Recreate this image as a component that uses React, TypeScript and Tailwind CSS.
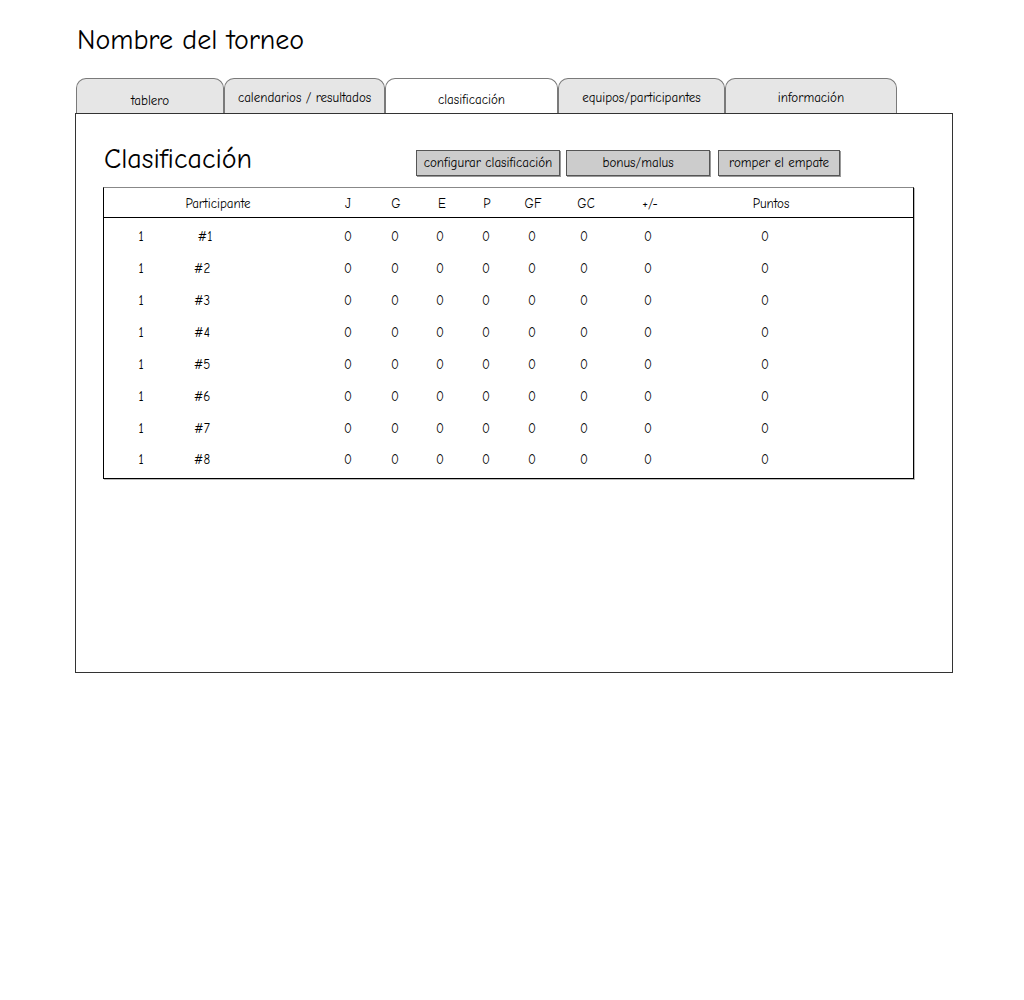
const font = { fontFamily: '"Comic Sans MS", "Comic Neue", "DejaVu Sans", sans-serif' };

const tabs = [
  { label: "tablero", w: "w-[148px]", active: false, pt: "pt-[12px]" },
  { label: "calendarios / resultados", w: "w-[161px]", active: false, pt: "pt-[9px]" },
  { label: "clasificación", w: "w-[173px]", active: true, pt: "pt-[11px]" },
  { label: "equipos/participantes", w: "w-[167px]", active: false, pt: "pt-[9px]" },
  { label: "información", w: "w-[172px]", active: false, pt: "pt-[9px]" },
];

// header cells laid out so each label sits over its column
const headCells = [
  { t: "Participante", w: "w-[228px]" },
  { t: "J", w: "w-[32px]" },
  { t: "G", w: "w-[64px]" },
  { t: "E", w: "w-[28px]" },
  { t: "P", w: "w-[62px]" },
  { t: "GF", w: "w-[30px]" },
  { t: "GC", w: "w-[76px]" },
  { t: "+/-", w: "w-[52px]" },
  { t: "Puntos", w: "w-[190px]" },
];

const valueCells = [
  "ml-[102px]",
  "ml-[7px]",
  "ml-[5px]",
  "ml-[6px]",
  "ml-[6px]",
  "ml-[12px]",
  "ml-[24px]",
  "ml-[77px]",
];

const rows = [1, 2, 3, 4, 5, 6, 7, 8];

function Row({ n }: { n: number }) {
  return (
    <div className={`flex items-center text-[13px] text-black ${n === 8 ? "h-[29px]" : "h-[32px]"}`}>
      <div className="w-[74px] text-center">1</div>
      <div className={`w-[48px] text-center ${n === 1 ? "pl-[6px]" : ""}`}>#{n}</div>
      {valueCells.map((ml, i) => (
        <div key={i} className={`w-[40px] text-center ${ml}`}>0</div>
      ))}
    </div>
  );
}

export default function App() {
  return (
    <div className="w-[1024px] h-[1000px] bg-white text-black" style={font}>
      <div className="pl-[77px] pt-[23px]">
        <h1 className="text-[28px] leading-[35px]">Nombre del torneo</h1>
      </div>

      <div className="pl-[75px] pt-[20px]">
        <div className="flex pl-[1px] h-[35px]">
          {tabs.map((tab) => (
            <div
              key={tab.label}
              className={`${tab.w} h-[35px] rounded-t-[10px] border border-b-0 border-[#7a7a7a] text-center text-[13px] ${tab.pt} ${
                tab.active ? "bg-white" : "bg-[#e6e6e6]"
              }`}
            >
              {tab.label}
            </div>
          ))}
        </div>

        <div className="w-[878px] h-[560px] border border-[#333] pl-[27px] pt-[29px]">
          <div className="flex items-start">
            <h2 className="text-[28px] leading-[32px] w-[313px] pl-[1px]">Clasificación</h2>
            <div className="flex gap-[6px] pt-[7px]">
              <button className="w-[144px] h-[26px] bg-[#cccccc] border border-[#555] shadow-[1px_1px_0_#999] text-[13px]">
                configurar clasificación
              </button>
              <button className="w-[144px] h-[26px] bg-[#cccccc] border border-[#555] shadow-[1px_1px_0_#999] text-[13px]">
                bonus/malus
              </button>
              <button className="ml-[2px] w-[122px] h-[26px] bg-[#cccccc] border border-[#555] shadow-[1px_1px_0_#999] text-[13px]">
                romper el empate
              </button>
            </div>
          </div>

          <div className="mt-[11px] w-[811px] h-[292px] border border-black border-t-[#888] shadow-[1px_1px_0_#bbb]">
            <div className="flex items-center h-[30px] pt-[2px] border-b border-black text-[13px]">
              {headCells.map((c) => (
                <div key={c.t} className={`${c.w} text-center`}>
                  {c.t}
                </div>
              ))}
            </div>
            <div className="pt-[3px]">
              {rows.map((n) => (
                <Row key={n} n={n} />
              ))}
            </div>
          </div>
        </div>
      </div>
    </div>
  );
}
